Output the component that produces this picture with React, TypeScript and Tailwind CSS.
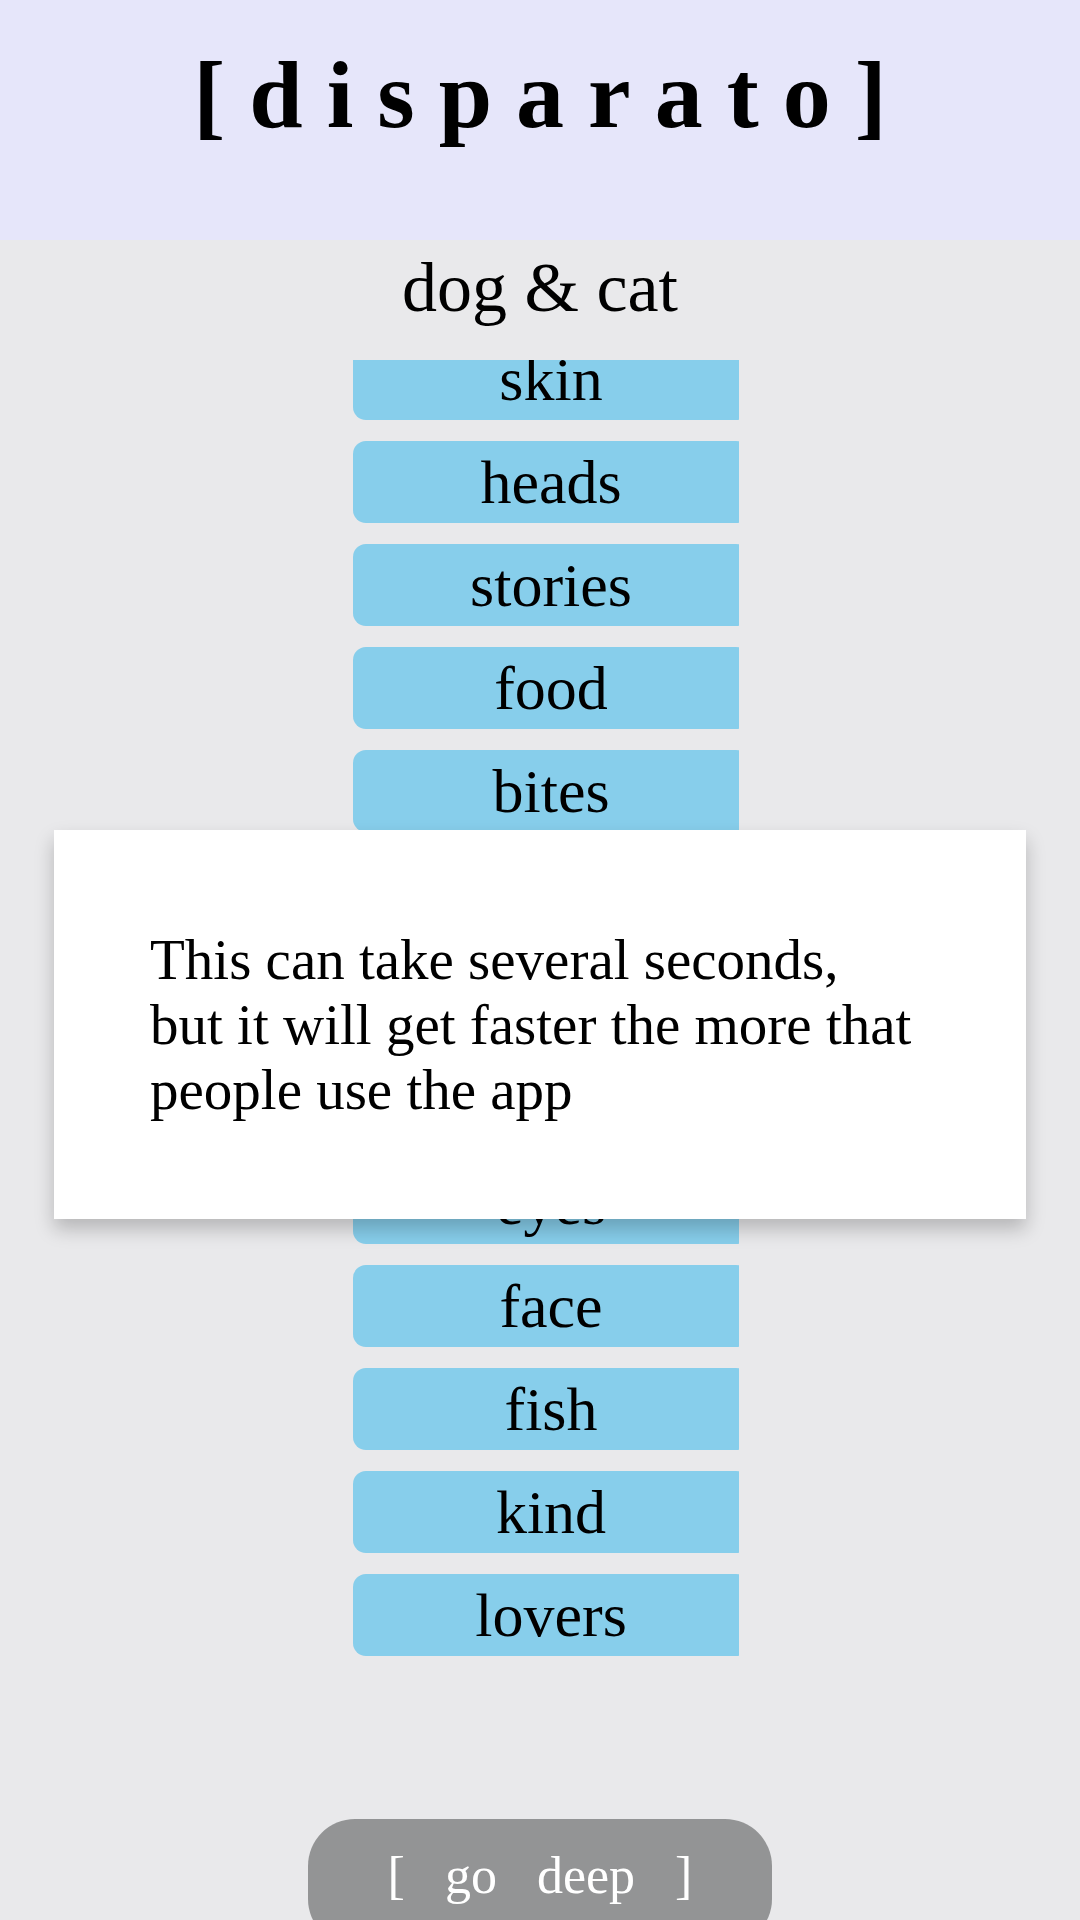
import React from "react";

const words = ["skin", "heads", "stories", "food", "bites", "ears", "tails", "toys", "eyes", "face", "fish", "kind", "lovers"];

export default function App() {
  return (
    <div className="relative min-h-[1920px] w-[1080px] overflow-hidden bg-[#e9e9eb]" style={{ fontFamily: '"Liberation Serif", serif' }}>
      <header className="h-[240px] bg-[#e6e6fa] pt-[42px] text-center">
        <h1 className="pl-[24px] text-[96px] font-bold leading-[106px] tracking-[24px] text-black">
          [disparato]
        </h1>
      </header>

      <div className="mt-[8px] text-center text-[70px] leading-[80px] text-black">dog &amp; cat</div>

      <div className="ml-[353px] mt-[32px] h-[1360px] w-[386px] overflow-hidden">
        <div className="-mt-[22px] flex flex-col gap-[21px]">
          {words.map((w) => (
            <div
              key={w}
              className="h-[82px] w-[396px] shrink-0 rounded-[13px] bg-[#87ceeb] text-center text-[62px] leading-[82px] text-black"
            >
              {w}
            </div>
          ))}
        </div>
      </div>

      <div className="mx-auto mt-[99px] flex w-[464px] justify-center gap-[40px] rounded-[47px] bg-[#939495] pb-[40px] pt-[27px] text-[52px] leading-[60px] text-white">
        <span>[</span>
        <span>go</span>
        <span>deep</span>
        <span>]</span>
      </div>

      <div className="absolute left-[54px] top-[830px] w-[972px] bg-white px-[96px] py-[97px] shadow-[0_10px_18px_rgba(0,0,0,0.22)]">
        <p className="text-[57px] leading-[65px] text-black">
          This can take several seconds,
          <br />
          but it will get faster the more that people use the app
        </p>
      </div>
    </div>
  );
}
